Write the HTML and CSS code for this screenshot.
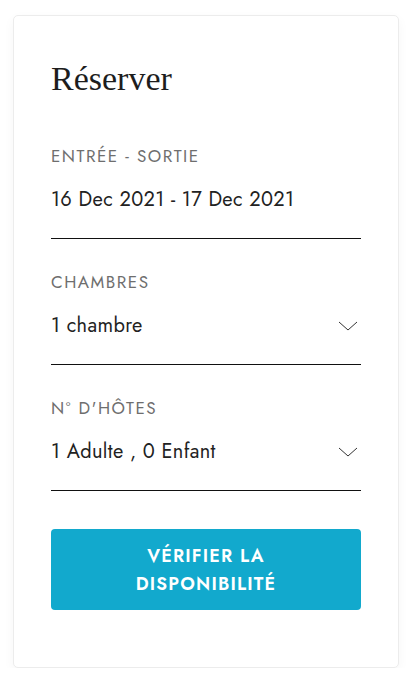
FILE: index.html
```html
<!DOCTYPE html>
<html lang="fr">
<head>
<meta charset="utf-8">
<link rel="stylesheet" href="styles.css">
</head>
<body>
<div class="card">
  <h2 class="title">Réserver</h2>
  <div class="field">
    <div class="label">ENTRÉE - SORTIE</div>
    <div class="value"><span>16 Dec 2021 - 17 Dec 2021</span></div>
  </div>
  <div class="field">
    <div class="label">CHAMBRES</div>
    <div class="value"><span>1 chambre</span>
      <svg class="chev" width="20" height="10" viewBox="0 0 20 10"><path d="M1 1 L10 9 L19 1" fill="none" stroke="#333" stroke-width="1"/></svg>
    </div>
  </div>
  <div class="field">
    <div class="label">N° D'HÔTES</div>
    <div class="value"><span>1 Adulte , 0 Enfant</span>
      <svg class="chev" width="20" height="10" viewBox="0 0 20 10"><path d="M1 1 L10 9 L19 1" fill="none" stroke="#333" stroke-width="1"/></svg>
    </div>
  </div>
  <button class="btn">VÉRIFIER LA<br>DISPONIBILITÉ</button>
</div>
</body>
</html>
```
FILE: styles.css
```css
html, body { margin: 0; padding: 0; background: #fff; }
body { padding: 15px 14px 0 13px; font-family: "Jost", "Lato", "Noto Sans", sans-serif; }
.card {
  width: 386px;
  box-sizing: border-box;
  border: 1px solid #ececec;
  border-radius: 5px;
  box-shadow: 0 4px 12px rgba(0,0,0,0.04);
  padding: 43px 37px 57px 37px;
  background: #fff;
}
.title {
  margin: 0;
  font-family: "Liberation Serif", "DejaVu Serif", serif;
  font-weight: 400;
  font-size: 34px;
  line-height: 40px;
  color: #1d1d1d;
}
.field { border-bottom: 1px solid #111; }
.title + .field { margin-top: 47px; }
.field + .field { margin-top: 33px; }
.label {
  font-size: 17px;
  line-height: 20px;
  font-weight: 400;
  letter-spacing: 1.5px;
  color: #6e6e6e;
}
.value {
  display: flex;
  justify-content: space-between;
  align-items: center;
  margin-top: 21px;
  padding-bottom: 25px;
  font-size: 20px;
  line-height: 26px;
  letter-spacing: 0.35px;
  color: #222;
}
.chev { margin-right: 3px; }
.btn {
  display: block;
  width: 100%;
  margin-top: 38px;
  height: 81px;
  border: 0;
  border-radius: 4px;
  background: #12a9cd;
  color: #fff;
  font-family: inherit;
  font-size: 18px;
  font-weight: 600;
  letter-spacing: 1.2px;
  line-height: 28px;
}
```
